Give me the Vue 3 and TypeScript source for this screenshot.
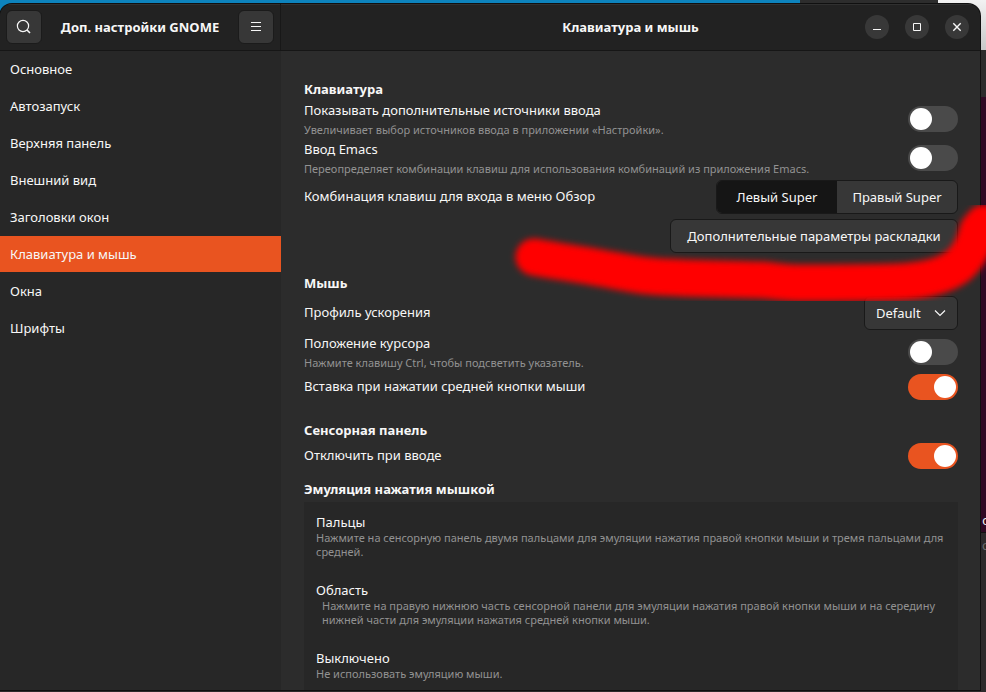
<script setup lang="ts">
import { ref } from 'vue'

type SuperKey = 'left' | 'right'

interface ClickMode {
  id: string
  title: string
  text: string
  indent?: boolean
}

const pages: string[] = [
  'Основное',
  'Автозапуск',
  'Верхняя панель',
  'Внешний вид',
  'Заголовки окон',
  'Клавиатура и мышь',
  'Окна',
  'Шрифты',
]
const current = ref<string>('Клавиатура и мышь')

const extraSources = ref(false)
const emacsInput = ref(false)
const superKey = ref<SuperKey>('left')
const profile = ref('Default')
const locatePointer = ref(false)
const middlePaste = ref(true)
const disableTyping = ref(true)
const clickMode = ref('')

const clickModes: ClickMode[] = [
  {
    id: 'fingers',
    title: 'Пальцы',
    text: 'Нажмите на сенсорную панель двумя пальцами для эмуляции нажатия правой кнопки мыши и тремя пальцами для средней.',
  },
  {
    id: 'area',
    title: 'Область',
    text: 'Нажмите на правую нижнюю часть сенсорной панели для эмуляции нажатия правой кнопки мыши и на середину нижней части для эмуляции нажатия средней кнопки мыши.',
    indent: true,
  },
  { id: 'off', title: 'Выключено', text: 'Не использовать эмуляцию мыши.' },
]
</script>

<template>
  <div class="desktop">
    <div class="terminal" aria-hidden="true">
      <div class="terminal-bar"></div>
      <div class="terminal-body"><span>с</span></div>
      <div class="terminal-foot">с</div>
    </div>

    <div class="window">
      <header class="side-header">
        <button class="icon-button" type="button" aria-label="Поиск">
          <svg width="16" height="16" viewBox="0 0 16 16" fill="none" stroke="currentColor">
            <circle cx="7" cy="7" r="5.6" stroke-width="1.2" />
            <path d="M11 11l3 3" stroke-width="1.6" />
          </svg>
        </button>
        <h1 class="title">Доп. настройки GNOME</h1>
        <button class="icon-button" type="button" aria-label="Меню">
          <svg width="16" height="16" viewBox="0 0 16 16" fill="none" stroke="currentColor">
            <path d="M3 3.5h10M3 7.5h10M3 11.5h10" />
          </svg>
        </button>
      </header>

      <header class="main-header">
        <h2 class="title">Клавиатура и мышь</h2>
        <div class="controls">
          <button class="round" type="button" aria-label="Свернуть">
            <svg width="16" height="16" viewBox="0 0 16 16" fill="none" stroke="currentColor">
              <path d="M4 10.5h8" />
            </svg>
          </button>
          <button class="round" type="button" aria-label="Развернуть">
            <svg width="16" height="16" viewBox="0 0 16 16" fill="none" stroke="currentColor">
              <path d="M4.5 4.5h7v7h-7z" />
            </svg>
          </button>
          <button class="round" type="button" aria-label="Закрыть">
            <svg width="16" height="16" viewBox="0 0 16 16" fill="none" stroke="currentColor">
              <path d="M4.3 4.3l7.4 7.4M11.7 4.3l-7.4 7.4" stroke-width="1.4" />
            </svg>
          </button>
        </div>
      </header>

      <nav class="sidebar">
        <a
          v-for="page in pages"
          :key="page"
          href="#"
          :class="{ active: page === current }"
          @click.prevent="current = page"
        >{{ page }}</a>
      </nav>

      <main class="content">
        <section>
          <h3>Клавиатура</h3>
          <div class="row">
            <label class="text" for="sources">
              <span class="name">Показывать дополнительные источники ввода</span>
              <span class="hint">Увеличивает выбор источников ввода в приложении «Настройки».</span>
            </label>
            <input id="sources" v-model="extraSources" class="switch" type="checkbox" />
          </div>
          <div class="row">
            <label class="text" for="emacs">
              <span class="name">Ввод Emacs</span>
              <span class="hint">Переопределяет комбинации клавиш для использования комбинаций из приложения Emacs.</span>
            </label>
            <input id="emacs" v-model="emacsInput" class="switch" type="checkbox" />
          </div>
          <div class="row">
            <span id="overview" class="name">Комбинация клавиш для входа в меню Обзор</span>
            <div class="segmented" role="group" aria-labelledby="overview">
              <button type="button" :aria-pressed="superKey === 'left'" @click="superKey = 'left'">Левый Super</button>
              <button type="button" :aria-pressed="superKey === 'right'" @click="superKey = 'right'">Правый Super</button>
            </div>
          </div>
          <div class="row end">
            <button class="button" type="button">Дополнительные параметры раскладки</button>
          </div>
        </section>

        <section>
          <h3>Мышь</h3>
          <div class="row">
            <label class="name" for="profile">Профиль ускорения</label>
            <div class="combo">
              <select id="profile" v-model="profile">
                <option>Default</option>
                <option>Flat</option>
                <option>Adaptive</option>
              </select>
              <svg width="16" height="16" viewBox="0 0 16 16" fill="none" stroke="currentColor">
                <path d="M3 5.5l5 5 5-5" stroke-width="1.2" />
              </svg>
            </div>
          </div>
          <div class="row">
            <label class="text" for="pointer">
              <span class="name">Положение курсора</span>
              <span class="hint">Нажмите клавишу Ctrl, чтобы подсветить указатель.</span>
            </label>
            <input id="pointer" v-model="locatePointer" class="switch" type="checkbox" />
          </div>
          <div class="row short">
            <label class="name" for="paste">Вставка при нажатии средней кнопки мыши</label>
            <input id="paste" v-model="middlePaste" class="switch" type="checkbox" />
          </div>
        </section>

        <section>
          <h3>Сенсорная панель</h3>
          <div class="row short">
            <label class="name" for="typing">Отключить при вводе</label>
            <input id="typing" v-model="disableTyping" class="switch" type="checkbox" />
          </div>
          <h3 class="sub">Эмуляция нажатия мышкой</h3>
          <div class="modes">
            <button
              v-for="mode in clickModes"
              :key="mode.id"
              type="button"
              :aria-pressed="clickMode === mode.id"
              @click="clickMode = mode.id"
            >
              <span class="mode-title">{{ mode.title }}</span>
              <span class="mode-text" :class="{ indent: mode.indent }">{{ mode.text }}</span>
            </button>
          </div>
        </section>
      </main>
    </div>

    <svg class="marker" width="486" height="130" viewBox="500 190 486 130" aria-hidden="true">
      <defs>
        <filter id="soft" x="-10%" y="-30%" width="120%" height="160%">
          <feGaussianBlur stdDeviation="3" />
        </filter>
      </defs>
      <path
        d="M534 257C556 261 577 264 600 268C624 272 638 276 662 277C700 279 732 279 762 280C776 281 786 283 802 283C836 283 866 283 896 282C922 281 944 277 959 265C972 253 975 240 978 230L984 223"
        fill="none"
        stroke="#ff0000"
        stroke-width="37"
        stroke-linecap="round"
        stroke-linejoin="round"
        filter="url(#soft)"
      />
    </svg>
  </div>
</template>

<style>
body {
  margin: 0;
  background: #2d2a2b;
}
</style>

<style scoped>
.desktop {
  position: relative;
  box-sizing: border-box;
  height: 100vh;
  overflow: hidden;
  padding: 4px 6px 2px 0;
  font-family: "Noto Sans", "Open Sans", sans-serif;
  font-size: 13px;
  color: #f7f7f7;
  background:
    linear-gradient(#f2f2f2, #c8c8c8) right top / 48px 50px no-repeat,
    linear-gradient(#2d2d2d, #2d2d2d) right top / 186px 20px no-repeat,
    linear-gradient(#0d83bd, #0d83bd) left top / 100% 20px no-repeat,
    #2d2a2b;
}

/* Terminal window that shows past the right edge of the settings window */
.terminal {
  position: absolute;
  top: 50px;
  right: 0;
  bottom: 0;
  display: flex;
  flex-direction: column;
  width: 5px;
  overflow: hidden;
}

.terminal-bar {
  height: 47px;
  background: #2c2c2c;
}

.terminal-body {
  display: flex;
  align-items: flex-end;
  box-sizing: border-box;
  height: 436px;
  padding-left: 1px;
  border-bottom: 1px solid #111111;
  background: #300a24;
  font-family: "Liberation Mono", monospace;
  line-height: 20px;
}

.terminal-foot {
  padding-left: 1px;
  line-height: 24px;
  color: #6c6c6c;
}

.window {
  position: relative;
  display: grid;
  grid-template-columns: 281px minmax(0, 1fr);
  grid-template-rows: 46px minmax(0, 1fr);
  row-gap: 1px;
  height: 100%;
  overflow: hidden;
  border-radius: 12px 12px 0 0;
  background: #161616;
  box-shadow: 0 0 0 1px #101010;
}

.side-header,
.main-header {
  align-items: center;
  background: #222222;
  box-shadow: inset 0 1px #303030;
}

.side-header {
  display: flex;
  justify-content: space-between;
  padding: 0 6px;
  border-right: 1px solid #181818;
}

.main-header {
  display: grid;
  grid-template-columns: 1fr auto 1fr;
  padding: 0 11px;
}

.main-header .title {
  grid-column: 2;
}

.title {
  margin: 0;
  font-size: 13px;
  line-height: 20px;
  font-weight: 700;
}

button,
select {
  font: inherit;
  color: inherit;
  cursor: pointer;
}

.icon-button {
  box-sizing: border-box;
  display: grid;
  place-items: center;
  width: 36px;
  height: 34px;
  padding: 0;
  border: 1px solid #1b1b1b;
  border-radius: 6px;
  background: #373737;
}

.controls {
  display: flex;
  justify-content: flex-end;
  gap: 16px;
}

.round {
  display: grid;
  place-items: center;
  width: 24px;
  height: 24px;
  padding: 0;
  border: 0;
  border-radius: 50%;
  background: #383838;
}

.sidebar {
  display: flex;
  flex-direction: column;
  gap: 1px;
  background: #272727;
}

.sidebar a {
  padding: 0 10px;
  line-height: 36px;
  color: inherit;
  text-decoration: none;
}

.sidebar a.active {
  background: #e95420;
}

.content {
  display: flex;
  flex-direction: column;
  gap: 18px;
  padding: 28px 22px 0 23px;
  overflow: hidden;
  background: #2c2c2c;
}

h3 {
  margin: 0;
  font-size: 13px;
  font-weight: 700;
  line-height: 20px;
}

h3.sub {
  padding: 8px 0 3px;
}

.row {
  display: flex;
  align-items: center;
  justify-content: space-between;
  height: 39px;
}

.row.short {
  height: 31px;
}

.row.end {
  justify-content: flex-end;
}

.text {
  display: flex;
  flex-direction: column;
}

.name {
  line-height: 21px;
}

.hint {
  font-size: 11px;
  line-height: 17px;
  color: #929292;
}

.switch {
  appearance: none;
  box-sizing: border-box;
  display: flex;
  flex: none;
  width: 50px;
  height: 26px;
  margin: 0;
  padding: 2px;
  border-radius: 13px;
  background: #4a4a4a;
  cursor: pointer;
}

.switch::before {
  content: "";
  width: 22px;
  height: 22px;
  border-radius: 50%;
  background: #ffffff;
}

.switch:checked {
  justify-content: flex-end;
  background: #e95420;
}

.segmented,
.button,
.combo {
  box-sizing: border-box;
  height: 34px;
  border: 1px solid #191919;
  border-radius: 6px;
  background: #373737;
}

.segmented {
  display: grid;
  grid-template-columns: 1fr 1fr;
  width: 242px;
  overflow: hidden;
}

.segmented button {
  padding: 0;
  border: 0;
  background: none;
}

.segmented button[aria-pressed="true"] {
  background: #151515;
}

.button {
  width: 288px;
  padding: 0;
}

.combo {
  display: grid;
  align-items: center;
  width: 94px;
}

.combo select,
.combo svg {
  grid-area: 1 / 1;
}

.combo select {
  appearance: none;
  height: 32px;
  padding: 0 30px 0 11px;
  border: 0;
  background: none;
}

.combo option {
  background: #373737;
}

.combo svg {
  justify-self: end;
  margin-right: 9px;
  pointer-events: none;
}

.combo {
  grid-template-columns: minmax(0, 1fr);
}

.modes {
  display: flex;
  flex-direction: column;
  background: #272727;
}

.modes button {
  display: flex;
  flex-direction: column;
  padding: 11px 12px;
  border: 0;
  background: none;
  text-align: left;
}

.mode-title {
  line-height: 18px;
}

.mode-text {
  font-size: 11px;
  line-height: 14px;
  color: #929292;
}

.mode-text.indent {
  padding-left: 6px;
}

.marker {
  position: absolute;
  top: 190px;
  left: 500px;
  pointer-events: none;
}
</style>
